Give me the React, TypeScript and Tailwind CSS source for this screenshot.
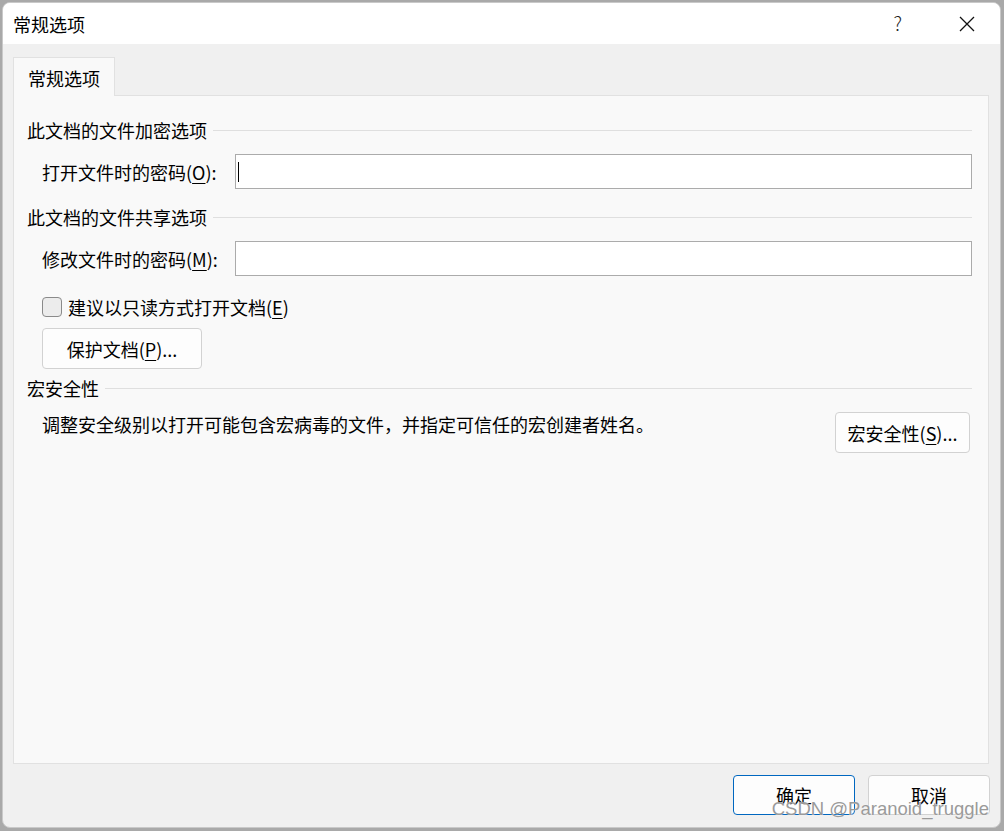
import React from "react";

const font = { fontFamily: '"Noto Sans CJK SC", "Noto Sans", sans-serif' };

function U({ c }: { c: string }) {
  return <span className="underline underline-offset-[3px] decoration-1">{c}</span>;
}

function Heading({ text }: { text: string }) {
  return (
    <div className="flex items-center h-[24px] pr-[16px]">
      <span className="leading-[24px] whitespace-nowrap">{text}</span>
      <div className="flex-1 h-px bg-[#dfdfdf] ml-[6px]" />
    </div>
  );
}

function PwdRow({ label, k, caret }: { label: string; k: string; caret?: boolean }) {
  return (
    <div className="flex items-center pl-[15px] pr-[16px]">
      <span className="w-[193px] leading-[24px] whitespace-nowrap">
        {label}(<U c={k} />):
      </span>
      <div className="flex-1 h-[35px] bg-white border border-[#ababab] flex items-center pl-[2px]">
        {caret && <div className="w-px h-[20px] bg-black" />}
      </div>
    </div>
  );
}

export default function App() {
  return (
    <div
      className="w-[1004px] h-[831px] bg-[#a9a9a9] pl-[2px] pt-[2px] pr-[3px] pb-[3px] text-[18px] text-black"
      style={font}
    >
      <div className="relative w-full h-full rounded-[8px] bg-[#f0f0f0] border border-[#c9c9c9] overflow-hidden flex flex-col">
        {/* title bar */}
        <div className="h-[41px] bg-white flex items-center pl-[10px] shrink-0">
          <span className="leading-[24px]">常规选项</span>
          <div className="flex-1" />
          <span className="text-[19px] font-light leading-[24px] text-[#222] mr-[57px] mt-[-2px]">?</span>
          <svg width="16" height="16" viewBox="0 0 16 16" className="mr-[25px]">
            <path d="M1 1 L15 15 M15 1 L1 15" stroke="#111" strokeWidth="1.3" fill="none" />
          </svg>
        </div>

        {/* body */}
        <div className="flex-1 flex flex-col pl-[10px] pr-[11px] pt-[13px] pb-[12px]">
          {/* tab strip */}
          <div className="flex h-[38px] shrink-0">
            <div className="w-[102px] h-[39px] bg-[#f9f9f9] border border-[#e1e1e1] border-b-0 flex items-center pl-[14px] relative z-10">
              <span className="leading-[24px] pt-[2px]">常规选项</span>
            </div>
          </div>
          {/* panel */}
          <div className="flex-1 bg-[#f9f9f9] border border-[#e1e1e1] flex flex-col pl-[13px] pt-[22px]">
            <Heading text="此文档的文件加密选项" />
            <div className="mt-[12px]">
              <PwdRow label="打开文件时的密码" k="O" caret />
            </div>
            <div className="mt-[16px]">
              <Heading text="此文档的文件共享选项" />
            </div>
            <div className="mt-[12px]">
              <PwdRow label="修改文件时的密码" k="M" />
            </div>
            <div className="mt-[21px] pl-[15px] flex items-center h-[20px]">
              <div className="w-[20px] h-[20px] rounded-[4px] border border-[#8a8a8a] bg-[#ececec]" />
              <span className="ml-[6px] leading-[24px]">
                建议以只读方式打开文档(<U c="E" />)
              </span>
            </div>
            <div className="mt-[11px] pl-[15px] flex">
              <div className="w-[160px] h-[41px] rounded-[4px] border border-[#d2d2d2] bg-[#fdfdfd] flex items-center justify-center">
                <span className="leading-[24px]">
                  保护文档(<U c="P" />)...
                </span>
              </div>
            </div>
            <div className="mt-[7px]">
              <Heading text="宏安全性" />
            </div>
            <div className="mt-[12px] pl-[15px] pr-[18px] flex items-start">
              <span className="leading-[24px] flex-1 whitespace-nowrap">
                调整安全级别以打开可能包含宏病毒的文件，并指定可信任的宏创建者姓名。
              </span>
              <div className="w-[135px] h-[41px] rounded-[4px] border border-[#d2d2d2] bg-[#fdfdfd] flex items-center justify-center">
                <span className="leading-[24px]">
                  宏安全性(<U c="S" />)...
                </span>
              </div>
            </div>
          </div>
          {/* bottom buttons */}
          <div className="mt-[11px] flex justify-end gap-[13px] shrink-0">
            <div className="w-[122px] h-[40px] rounded-[4px] border border-[#0067c0] bg-[#fdfdfd] flex items-center justify-center">
              <span className="leading-[24px]">确定</span>
            </div>
            <div className="w-[122px] h-[40px] rounded-[4px] border border-[#d2d2d2] bg-[#fdfdfd] flex items-center justify-center mr-[-1px]">
              <span className="leading-[24px]">取消</span>
            </div>
          </div>
        </div>

        {/* watermark */}
        <div
          className="absolute right-[11px] bottom-[6px] text-[18.5px] text-[#9a9a9a] leading-[24px] whitespace-nowrap"
          style={{ fontFamily: '"Liberation Sans", Arial, sans-serif', textShadow: "0 0 1px #ffffff" }}
        >
          CSDN @Paranoid_truggle
        </div>
      </div>
    </div>
  );
}
